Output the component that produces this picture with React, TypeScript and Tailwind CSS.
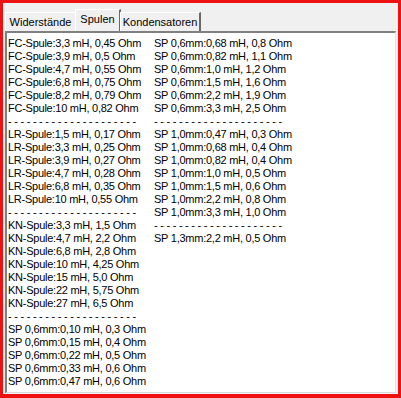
const col1 = [
  "FC-Spule:3,3 mH, 0,45 Ohm",
  "FC-Spule:3,9 mH, 0,5 Ohm",
  "FC-Spule:4,7 mH, 0,55 Ohm",
  "FC-Spule:6,8 mH, 0,75 Ohm",
  "FC-Spule:8,2 mH, 0,79 Ohm",
  "FC-Spule:10 mH, 0,82 Ohm",
  "- - - - - - - - - - - - - - - - - - - - -",
  "LR-Spule:1,5 mH, 0,17 Ohm",
  "LR-Spule:3,3 mH, 0,25 Ohm",
  "LR-Spule:3,9 mH, 0,27 Ohm",
  "LR-Spule:4,7 mH, 0,28 Ohm",
  "LR-Spule:6,8 mH, 0,35 Ohm",
  "LR-Spule:10 mH, 0,55 Ohm",
  "- - - - - - - - - - - - - - - - - - - - -",
  "KN-Spule:3,3 mH, 1,5 Ohm",
  "KN-Spule:4,7 mH, 2,2 Ohm",
  "KN-Spule:6,8 mH, 2,8 Ohm",
  "KN-Spule:10 mH, 4,25 Ohm",
  "KN-Spule:15 mH, 5,0 Ohm",
  "KN-Spule:22 mH, 5,75 Ohm",
  "KN-Spule:27 mH, 6,5 Ohm",
  "- - - - - - - - - - - - - - - - - - - - -",
  "SP 0,6mm:0,10 mH, 0,3 Ohm",
  "SP 0,6mm:0,15 mH, 0,4 Ohm",
  "SP 0,6mm:0,22 mH, 0,5 Ohm",
  "SP 0,6mm:0,33 mH, 0,6 Ohm",
  "SP 0,6mm:0,47 mH, 0,6 Ohm",
];

const col2 = [
  "SP 0,6mm:0,68 mH, 0,8 Ohm",
  "SP 0,6mm:0,82 mH, 1,1 Ohm",
  "SP 0,6mm:1,0 mH, 1,2 Ohm",
  "SP 0,6mm:1,5 mH, 1,6 Ohm",
  "SP 0,6mm:2,2 mH, 1,9 Ohm",
  "SP 0,6mm:3,3 mH, 2,5 Ohm",
  "- - - - - - - - - - - - - - - - - - - - -",
  "SP 1,0mm:0,47 mH, 0,3 Ohm",
  "SP 1,0mm:0,68 mH, 0,4 Ohm",
  "SP 1,0mm:0,82 mH, 0,4 Ohm",
  "SP 1,0mm:1,0 mH, 0,5 Ohm",
  "SP 1,0mm:1,5 mH, 0,6 Ohm",
  "SP 1,0mm:2,2 mH, 0,8 Ohm",
  "SP 1,0mm:3,3 mH, 1,0 Ohm",
  "- - - - - - - - - - - - - - - - - - - - -",
  "SP 1,3mm:2,2 mH, 0,5 Ohm",
];

function Column({ items }: { items: string[] }) {
  return (
    <div className="w-[146px] shrink-0 flex flex-col">
      {items.map((t, i) => (
        <div key={i} className="h-[13px] leading-[13px] whitespace-nowrap">
          {t}
        </div>
      ))}
    </div>
  );
}

export default function App() {
  const font = { fontFamily: '"Liberation Sans", Arial, sans-serif' };

  return (
    <div className="w-[401px] h-[398px] bg-[#ee1111] pt-[3px] pl-[3px] pr-[3px] pb-[4px]" style={font}>
      <div className="w-full h-full bg-[#f0f0f0] flex flex-col pl-[2px] pr-[2px]">
        {/* TABS */}
        <div className="h-[28px] flex items-end text-[11px] text-black">
          <div className="h-[19px] flex items-center justify-center w-[71px] border-t border-l border-white border-r border-r-[#a0a0a0]">
            Widerstände
          </div>
          <div className="h-[22px] flex items-center justify-center w-[46px] border-t border-l border-white border-r-2 border-r-[#696969] -mx-[1px] bg-[#f0f0f0] pb-[3px]">
            Spulen
          </div>
          <div className="h-[19px] flex items-center justify-center w-[81px] border-t border-l border-white border-r-2 border-r-[#696969]">
            Kondensatoren
          </div>
        </div>

        {/* LISTE */}
        <div className="flex-1 bg-white border-t-2 border-l-2 border-t-[#808080] border-l-[#808080] border-r border-b border-r-[#e3e3e3] border-b-[#d8d8d8] mb-[1px] flex pt-[4px] pl-[1px] text-[11px] tracking-[-0.25px] text-black overflow-hidden">
          <Column items={col1} />
          <Column items={col2} />
        </div>
      </div>
    </div>
  );
}
